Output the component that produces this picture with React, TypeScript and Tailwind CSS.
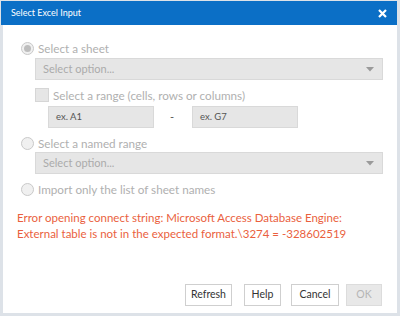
import { ReactNode } from 'react';

const font = { fontFamily: 'Lato, "Noto Sans", sans-serif' };

function Radio({ checked, label, className = '' }: { checked?: boolean; label: string; className?: string }) {
    return (
        <div className={`flex items-center h-4 ${className}`}>
            <div className="ml-[18px] w-[13px] h-[13px] rounded-full border border-[#c9c9c9] bg-[#f0f0f0] flex items-center justify-center">
                {checked && <div className="w-[7px] h-[7px] rounded-full bg-[#bdbdbd]" />}
            </div>
            <span className="ml-[4px] text-[11.7px] text-[#b0b0b0] leading-4">{label}</span>
        </div>
    );
}

function SelectBox({ className = '' }: { className?: string }) {
    return (
        <div className={`ml-[32px] w-[348px] h-[22px] bg-[#e6e6e6] border border-[#d9d9d9] flex items-center justify-between pl-[7px] pr-[8px] ${className}`}>
            <span className="text-[11px] text-[#ababab]">Select option...</span>
            <svg width="8" height="5" viewBox="0 0 8 5">
                <path d="M0 0 L8 0 L4 4.5 Z" fill="#9a9a9a" />
            </svg>
        </div>
    );
}

function Btn({ children, disabled, className = '' }: { children: ReactNode; disabled?: boolean; className?: string }) {
    return (
        <div
            className={`h-[22px] flex items-center justify-center border text-[10.5px] ${disabled ? 'bg-[#e8e8e8] border-[#dcdcdc] text-[#b5b5b5]' : 'bg-white border-[#cfcfcf] text-[#333]'} ${className}`}
        >
            {children}
        </div>
    );
}

export default function App() {
    return (
        <div className="w-[400px] h-[316px] bg-[#dde2e8] pt-[1px] pl-[1px] pr-[3px] pb-[3px] flex flex-col" style={font}>
            {/* Title bar */}
            <div className="h-[24px] bg-[#0b6fc6] flex items-center justify-between pl-[10px] pr-[10px]">
                <span className="text-[9px] text-white">Select Excel Input</span>
                <svg width="9" height="9" viewBox="0 0 9 9">
                    <path d="M1 1 L8 8 M8 1 L1 8" stroke="white" strokeWidth="2.2" />
                </svg>
            </div>

            {/* Body */}
            <div className="flex-1 bg-white ml-[2px] flex flex-col">
                <Radio checked label="Select a sheet" className="mt-[15px]" />
                <SelectBox className="mt-[2px]" />

                <div className="flex items-center h-4 mt-[7px]">
                    <div className="ml-[32px] w-[14px] h-[14px] bg-[#e6e6e6] border border-[#d6d6d6]" />
                    <span className="ml-[4px] text-[11.7px] text-[#b0b0b0] leading-4">Select a range (cells, rows or columns)</span>
                </div>

                <div className="flex items-center mt-[3px]">
                    <div className="ml-[45px] w-[106px] h-[22px] bg-[#e6e6e6] border border-[#d9d9d9] flex items-center pl-[7px]">
                        <span className="text-[9.5px] text-[#555]">ex. A1</span>
                    </div>
                    <span className="ml-[16px] w-[22px] text-[11px] text-[#555]">-</span>
                    <div className="w-[106px] h-[22px] bg-[#e6e6e6] border border-[#d9d9d9] flex items-center pl-[7px]">
                        <span className="text-[9.5px] text-[#555]">ex. G7</span>
                    </div>
                </div>

                <Radio label="Select a named range" className="mt-[7px]" />
                <SelectBox className="mt-[1px]" />

                <Radio label="Import only the list of sheet names" className="mt-[7px]" />

                <div className="mt-[13px] ml-[14px] text-[11.5px] leading-4 text-[#ea5f3e]">
                    <div>Error opening connect string: Microsoft Access Database Engine:</div>
                    <div>External table is not in the expected format.\3274 = -328602519</div>
                </div>

                <div className="mt-auto mb-[7px] flex justify-end pr-[15px] gap-[13px]">
                    <Btn className="w-[47px]">Refresh</Btn>
                    <Btn className="w-[37px] -ml-[1px]">Help</Btn>
                    <Btn className="w-[48px] -ml-[3px]">Cancel</Btn>
                    <Btn disabled className="w-[36px] -ml-[6px]">OK</Btn>
                </div>
            </div>
        </div>
    );
}
